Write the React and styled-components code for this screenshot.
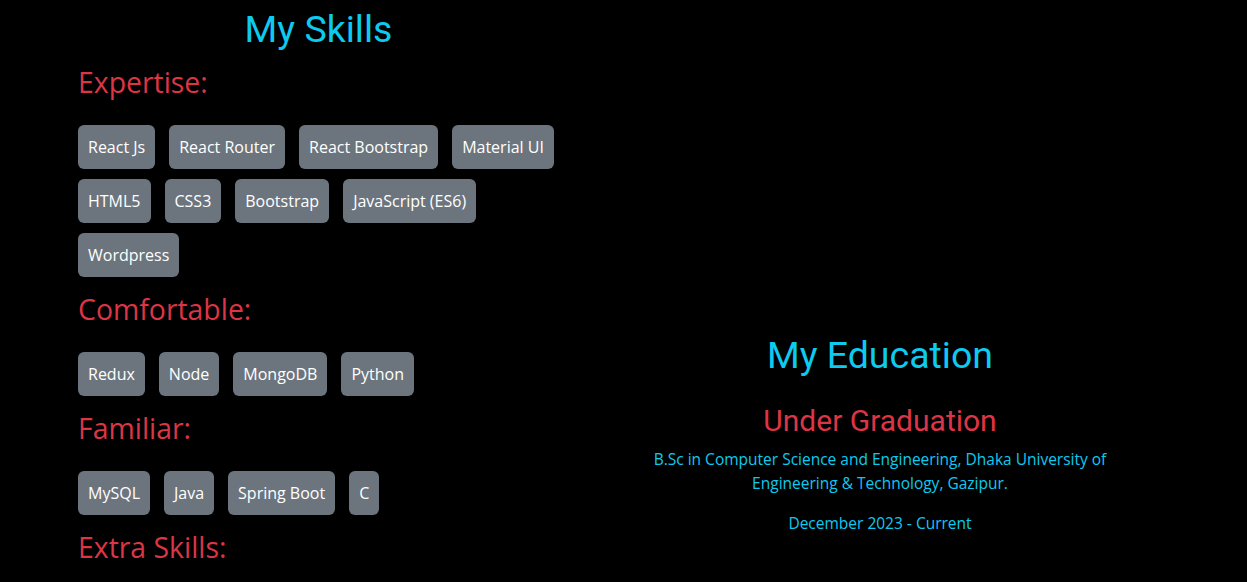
import React from 'react'
import styled, { createGlobalStyle } from 'styled-components'

const GlobalStyle = createGlobalStyle`
  html, body {
    margin: 0;
    padding: 0;
    background: #000;
  }
  body {
    font-family: "Open Sans", "Liberation Sans", sans-serif;
    color: #fff;
  }
`;

const Page = styled.div`
  display: grid;
  grid-template-columns: 481px 480px;
  column-gap: 81px;
  padding-left: 78px;
  min-height: 582px;
  background: #000;
`;

const SkillsColumn = styled.section`
  padding-top: 7px;
`;

const EducationColumn = styled.section`
  padding-top: 333px;
  text-align: center;
`;

const Title = styled.h1`
  margin: 0;
  font-family: Roboto, "Liberation Sans", sans-serif;
  font-weight: 400;
  font-size: 37.5px;
  line-height: 1.2;
  color: #0dcaf0;
  text-align: center;
`;

const GroupTitle = styled.h3`
  margin: ${p => (p.first ? '13px' : '15px')} 0 26px;
  font-family: "Open Sans", sans-serif;
  font-weight: 400;
  font-size: 28.4px;
  line-height: 1.2;
  color: #dc3545;
`;

const BadgeList = styled.div`
  display: flex;
  flex-wrap: wrap;
  column-gap: 14px;
  row-gap: 10px;
`;

const Badge = styled.span`
  display: inline-block;
  padding: 10px;
  background: #6c757d;
  color: #fff;
  font-size: 16px;
  line-height: 24px;
  border-radius: 6px;
  white-space: nowrap;
`;

const Degree = styled.h2`
  margin: 25px 0 0;
  font-family: Roboto, "Liberation Sans", sans-serif;
  font-weight: 400;
  font-size: 30px;
  line-height: 1.2;
  color: #dc3545;
`;

const Info = styled.p`
  margin: ${p => (p.gap ? '16px' : '8px')} auto 0;
  max-width: 480px;
  font-size: 15.5px;
  line-height: 24px;
  color: #0dcaf0;
`;

const skills = [
  { title: 'Expertise:', items: ['React Js', 'React Router', 'React Bootstrap', 'Material UI', 'HTML5', 'CSS3', 'Bootstrap', 'JavaScript (ES6)', 'Wordpress'] },
  { title: 'Comfortable:', items: ['Redux', 'Node', 'MongoDB', 'Python'] },
  { title: 'Familiar:', items: ['MySQL', 'Java', 'Spring Boot', 'C'] },
  { title: 'Extra Skills:', items: [] },
];

export default function App() {
  return (
    <>
      <GlobalStyle />
      <Page>
        <SkillsColumn>
          <Title>My Skills</Title>
          {skills.map((group, i) => (
            <div key={group.title}>
              <GroupTitle first={i === 0}>{group.title}</GroupTitle>
              {group.items.length > 0 && (
                <BadgeList>
                  {group.items.map(item => <Badge key={item}>{item}</Badge>)}
                </BadgeList>
              )}
            </div>
          ))}
        </SkillsColumn>
        <EducationColumn>
          <Title>My Education</Title>
          <Degree>Under Graduation</Degree>
          <Info>B.Sc in Computer Science and Engineering, Dhaka University of Engineering &amp; Technology, Gazipur.</Info>
          <Info gap>December 2023 - Current</Info>
        </EducationColumn>
      </Page>
    </>
  )
}
